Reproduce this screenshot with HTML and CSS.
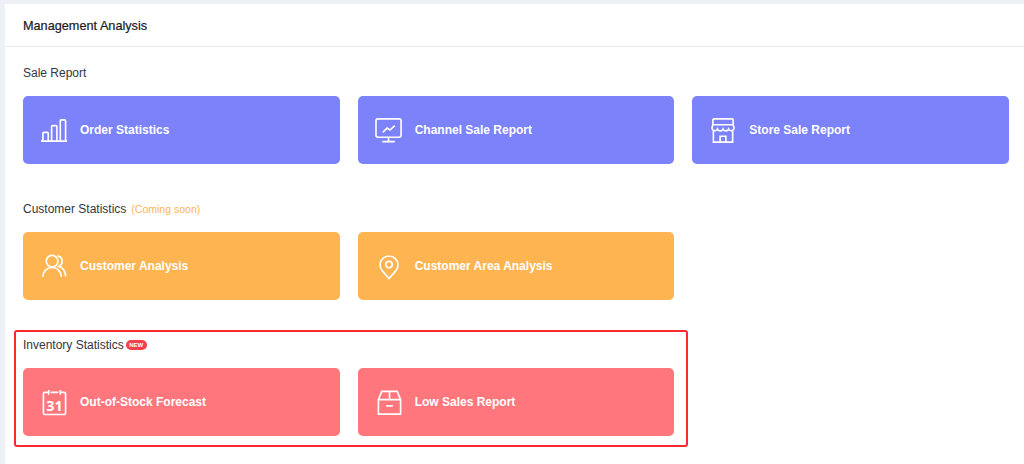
FILE: index.html
```html
<!DOCTYPE html>
<html lang="en">
<head>
<meta charset="utf-8">
<title>Management Analysis</title>
<link rel="stylesheet" href="styles.css">
</head>
<body>
<main class="panel">
  <header class="panel-head">Management Analysis</header>
  <div class="panel-body">
    <section class="group">
      <h2 class="group-title">Sale Report</h2>
      <div class="cards">
        <a class="card card-blue">
          <svg class="icon" viewBox="0 0 28 28"><path d="M0 25h27M2 25v-8a1 1 0 0 1 1-1h3.500a1 1 0 0 1 1 1v8M11 25V10a1 1 0 0 1 1-1h3.500a1 1 0 0 1 1 1v15M20 25V4a1 1 0 0 1 1-1h3.500a1 1 0 0 1 1 1v21"/></svg>
          <span>Order Statistics</span>
        </a>
        <a class="card card-blue">
          <svg class="icon" viewBox="1 0 28 28"><rect x="1" y="2" width="26" height="19" rx="2"/><path d="M14 21v5M7.500 25.500h13M8 16l4.500-4.500 3 2L20.500 9"/></svg>
          <span>Channel Sale Report</span>
        </a>
        <a class="card card-blue">
          <svg class="icon" viewBox="0 0 28 28"><path d="M3 3a1 1 0 0 1 1-1h19a1 1 0 0 1 1 1v5H3zM3 8l-1 3.500a3 3 0 0 0 5.700 1 3.200 3.200 0 0 0 5.800 0 3.200 3.200 0 0 0 5.800 0 3 3 0 0 0 5.700-1L24 8M3.500 14v12h20V14M10.500 26V20h6v6"/></svg>
          <span>Store Sale Report</span>
        </a>
      </div>
    </section>
    <section class="group">
      <h2 class="group-title">Customer Statistics <small class="soon">(Coming soon)</small></h2>
      <div class="cards">
        <a class="card card-orange">
          <svg class="icon" viewBox="0 0 28 28"><circle cx="11.500" cy="8.500" r="6"/><path d="M2 25c0-6 4-10 9.500-10S21 19 21 25M17 3c3.500.5 5 3 5 5.500s-1.500 4.500-3.500 5.500c4.500 1 7 5.500 7 10"/></svg>
          <span>Customer Analysis</span>
        </a>
        <a class="card card-orange">
          <svg class="icon" viewBox="0 0 28 28"><path d="M13.500 26.500l-7-8a9.300 9.300 0 1 1 14 0z"/><circle cx="13.500" cy="12" r="3.300"/></svg>
          <span>Customer Area Analysis</span>
        </a>
      </div>
    </section>
    <section class="group">
      <h2 class="group-title">Inventory Statistics <b class="new">NEW</b></h2>
      <div class="cards">
        <a class="card card-red">
          <svg class="icon" viewBox="0 0 28 28"><path d="M8 3.500H4a1.500 1.500 0 0 0-1.500 1.500v20A1.500 1.500 0 0 0 4 26.500h20a1.500 1.500 0 0 0 1.500-1.500V5A1.500 1.500 0 0 0 24 3.500h-4M8 1v5M20 1v5M10 3.500h8"/><text class="cal-num" x="14" y="22.500">31</text></svg>
          <span>Out-of-Stock Forecast</span>
        </a>
        <a class="card card-red">
          <svg class="icon" viewBox="0 0 28 28"><path d="M2.500 11h23v15h-23zM2.500 11L6 2.500h16l3.500 8.500M14 2.500V11M10.500 17.500h7"/></svg>
          <span>Low Sales Report</span>
        </a>
      </div>
    </section>
  </div>
  <div class="highlight"></div>
</main>
</body>
</html>
```
FILE: styles.css
```css
* { box-sizing: border-box; }
html, body { height: 100%; }
body {
  margin: 0;
  padding: 4px 0 0 5px;
  background: #edf0f5;
  font-family: "Liberation Sans", Arial, sans-serif;
  overflow: hidden;
}
.panel {
  position: relative;
  height: 100%;
  background: #fff;
}
.panel-head {
  height: 43px;
  padding: 2px 18px 0;
  display: flex;
  align-items: center;
  border-bottom: 1px solid #e8eaee;
  font-size: 12.7px;
  -webkit-text-stroke: 0.2px #17191f;
  color: #17191f;
}
.panel-body { padding: 0 15px 0 18px; }
.group { height: 136px; padding-top: 16px; }
.group-title {
  margin: 0 0 13px;
  height: 20px;
  display: flex;
  align-items: center;
  gap: 2px;
  font-size: 12px;
  font-weight: 400;
  color: #33363d;
}
.soon { font-size: 10.5px; color: #ffb452; margin-left: 3px; }
.new {
  width: 21px;
  height: 10px;
  border-radius: 5px;
  background: #f5404e;
  color: #fff;
  font-size: 6px;
  font-weight: 700;
  display: flex;
  align-items: center;
  justify-content: center;
}
.cards {
  display: grid;
  grid-template-columns: repeat(3, 1fr);
  gap: 18px;
}
.card {
  height: 68px;
  padding-left: 18px;
  display: flex;
  align-items: center;
  gap: 12px;
  border-radius: 5px;
  color: #fff;
  font-size: 12px;
  font-weight: 700;
}
.card-blue { background: #7b82fa; }
.card-orange { background: #ffb452; }
.card-red { background: #ff767c; }
.icon {
  flex: none;
  width: 27px;
  height: 27px;
  fill: none;
  stroke: #fff;
  stroke-width: 1.7;
  overflow: visible;
}
.cal-num {
  fill: #fff;
  stroke: none;
  font-size: 15px;
  font-weight: 700;
  text-anchor: middle;
  font-family: "Noto Sans", sans-serif;
}
.highlight {
  position: absolute;
  left: 9px;
  top: 326px;
  width: 674px;
  height: 117px;
  border: 2px solid #fb2a2e;
  border-radius: 3px;
  pointer-events: none;
}
```
